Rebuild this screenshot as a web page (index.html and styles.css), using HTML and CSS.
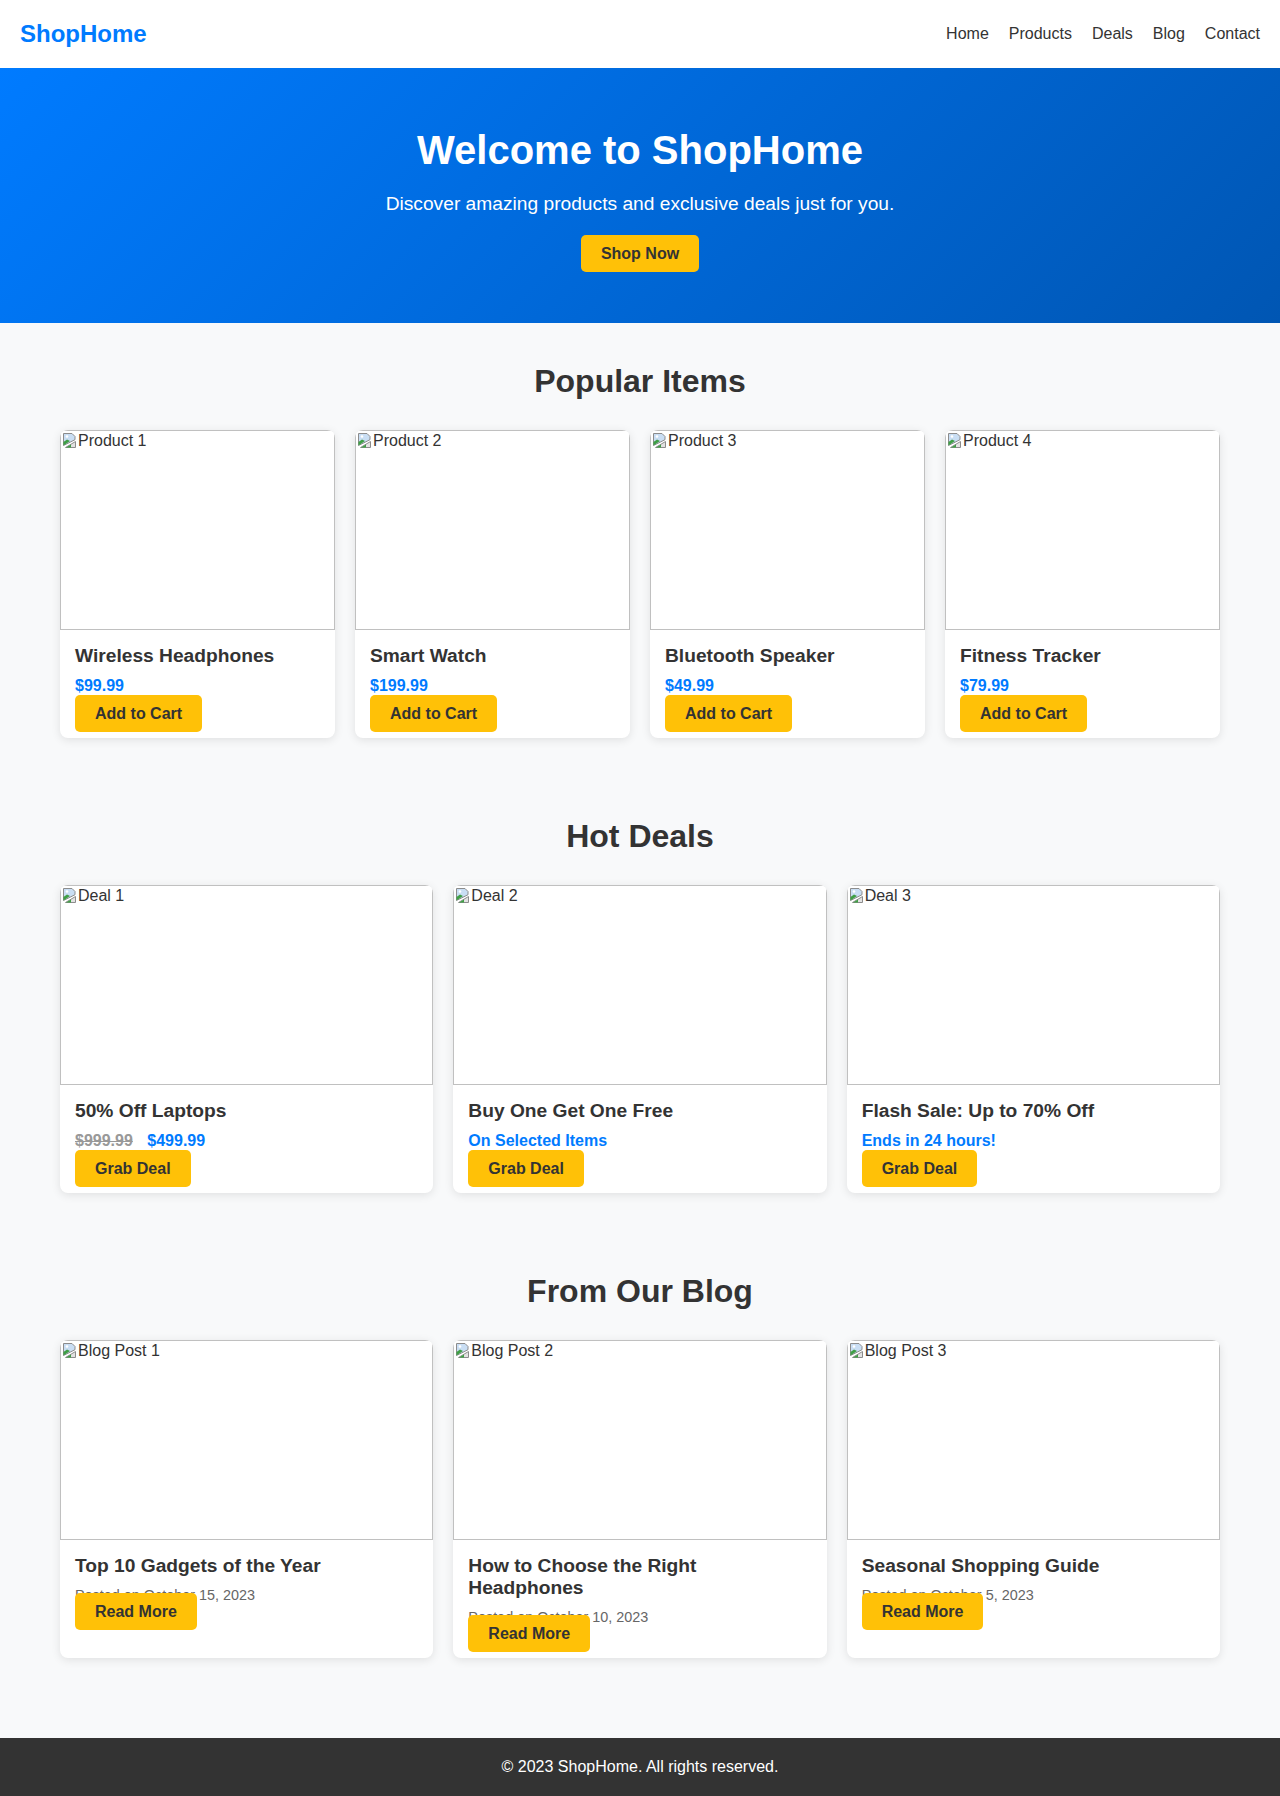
FILE: index.html
```html
<!DOCTYPE html>
<html lang="en">
<head>
<meta charset="utf-8">
<title>ShopHome</title>
<link rel="stylesheet" href="styles.css">
</head>
<body>
<header class="site-header">
  <div class="logo">ShopHome</div>
  <nav class="nav">
    <a href="#">Home</a>
    <a href="#">Products</a>
    <a href="#">Deals</a>
    <a href="#">Blog</a>
    <a href="#">Contact</a>
  </nav>
</header>

<section class="hero">
  <h1>Welcome to ShopHome</h1>
  <p>Discover amazing products and exclusive deals just for you.</p>
  <a href="#" class="btn">Shop Now</a>
</section>

<main class="main">
  <section class="section">
    <h2>Popular Items</h2>
    <div class="grid grid-4">
      <div class="card">
        <div class="ph"><svg class="broken" viewBox="0 0 16 16" width="16" height="16"><path d="M1.5 1.5h8.5l3 3v3.2L1.5 13.5z" fill="#c9def4" stroke="#8c8c8c"/><path d="M1.5 13.5V10l3.5-2.5 3 1.6z" fill="#3f9f45"/><circle cx="5" cy="4.5" r="1.3" fill="#fff"/><path d="M3.5 15.5l10-6v6z" fill="#e2e2e2" stroke="#8c8c8c"/><path d="M4 15.5l5-3v3z" fill="#3f9f45"/></svg><span>Product 1</span></div>
        <div class="card-body">
          <h3>Wireless Headphones</h3>
          <p class="price">$99.99</p>
          <a href="#" class="btn">Add to Cart</a>
        </div>
      </div>
      <div class="card">
        <div class="ph"><svg class="broken" viewBox="0 0 16 16" width="16" height="16"><path d="M1.5 1.5h8.5l3 3v3.2L1.5 13.5z" fill="#c9def4" stroke="#8c8c8c"/><path d="M1.5 13.5V10l3.5-2.5 3 1.6z" fill="#3f9f45"/><circle cx="5" cy="4.5" r="1.3" fill="#fff"/><path d="M3.5 15.5l10-6v6z" fill="#e2e2e2" stroke="#8c8c8c"/><path d="M4 15.5l5-3v3z" fill="#3f9f45"/></svg><span>Product 2</span></div>
        <div class="card-body">
          <h3>Smart Watch</h3>
          <p class="price">$199.99</p>
          <a href="#" class="btn">Add to Cart</a>
        </div>
      </div>
      <div class="card">
        <div class="ph"><svg class="broken" viewBox="0 0 16 16" width="16" height="16"><path d="M1.5 1.5h8.5l3 3v3.2L1.5 13.5z" fill="#c9def4" stroke="#8c8c8c"/><path d="M1.5 13.5V10l3.5-2.5 3 1.6z" fill="#3f9f45"/><circle cx="5" cy="4.5" r="1.3" fill="#fff"/><path d="M3.5 15.5l10-6v6z" fill="#e2e2e2" stroke="#8c8c8c"/><path d="M4 15.5l5-3v3z" fill="#3f9f45"/></svg><span>Product 3</span></div>
        <div class="card-body">
          <h3>Bluetooth Speaker</h3>
          <p class="price">$49.99</p>
          <a href="#" class="btn">Add to Cart</a>
        </div>
      </div>
      <div class="card">
        <div class="ph"><svg class="broken" viewBox="0 0 16 16" width="16" height="16"><path d="M1.5 1.5h8.5l3 3v3.2L1.5 13.5z" fill="#c9def4" stroke="#8c8c8c"/><path d="M1.5 13.5V10l3.5-2.5 3 1.6z" fill="#3f9f45"/><circle cx="5" cy="4.5" r="1.3" fill="#fff"/><path d="M3.5 15.5l10-6v6z" fill="#e2e2e2" stroke="#8c8c8c"/><path d="M4 15.5l5-3v3z" fill="#3f9f45"/></svg><span>Product 4</span></div>
        <div class="card-body">
          <h3>Fitness Tracker</h3>
          <p class="price">$79.99</p>
          <a href="#" class="btn">Add to Cart</a>
        </div>
      </div>
    </div>
  </section>

  <section class="section">
    <h2>Hot Deals</h2>
    <div class="grid grid-3">
      <div class="card">
        <div class="ph"><svg class="broken" viewBox="0 0 16 16" width="16" height="16"><path d="M1.5 1.5h8.5l3 3v3.2L1.5 13.5z" fill="#c9def4" stroke="#8c8c8c"/><path d="M1.5 13.5V10l3.5-2.5 3 1.6z" fill="#3f9f45"/><circle cx="5" cy="4.5" r="1.3" fill="#fff"/><path d="M3.5 15.5l10-6v6z" fill="#e2e2e2" stroke="#8c8c8c"/><path d="M4 15.5l5-3v3z" fill="#3f9f45"/></svg><span>Deal 1</span></div>
        <div class="card-body">
          <h3>50% Off Laptops</h3>
          <p class="price"><span class="old">$999.99</span> <span>$499.99</span></p>
          <a href="#" class="btn">Grab Deal</a>
        </div>
      </div>
      <div class="card">
        <div class="ph"><svg class="broken" viewBox="0 0 16 16" width="16" height="16"><path d="M1.5 1.5h8.5l3 3v3.2L1.5 13.5z" fill="#c9def4" stroke="#8c8c8c"/><path d="M1.5 13.5V10l3.5-2.5 3 1.6z" fill="#3f9f45"/><circle cx="5" cy="4.5" r="1.3" fill="#fff"/><path d="M3.5 15.5l10-6v6z" fill="#e2e2e2" stroke="#8c8c8c"/><path d="M4 15.5l5-3v3z" fill="#3f9f45"/></svg><span>Deal 2</span></div>
        <div class="card-body">
          <h3>Buy One Get One Free</h3>
          <p class="price">On Selected Items</p>
          <a href="#" class="btn">Grab Deal</a>
        </div>
      </div>
      <div class="card">
        <div class="ph"><svg class="broken" viewBox="0 0 16 16" width="16" height="16"><path d="M1.5 1.5h8.5l3 3v3.2L1.5 13.5z" fill="#c9def4" stroke="#8c8c8c"/><path d="M1.5 13.5V10l3.5-2.5 3 1.6z" fill="#3f9f45"/><circle cx="5" cy="4.5" r="1.3" fill="#fff"/><path d="M3.5 15.5l10-6v6z" fill="#e2e2e2" stroke="#8c8c8c"/><path d="M4 15.5l5-3v3z" fill="#3f9f45"/></svg><span>Deal 3</span></div>
        <div class="card-body">
          <h3>Flash Sale: Up to 70% Off</h3>
          <p class="price">Ends in 24 hours!</p>
          <a href="#" class="btn">Grab Deal</a>
        </div>
      </div>
    </div>
  </section>

  <section class="section">
    <h2>From Our Blog</h2>
    <div class="grid grid-3">
      <div class="card">
        <div class="ph"><svg class="broken" viewBox="0 0 16 16" width="16" height="16"><path d="M1.5 1.5h8.5l3 3v3.2L1.5 13.5z" fill="#c9def4" stroke="#8c8c8c"/><path d="M1.5 13.5V10l3.5-2.5 3 1.6z" fill="#3f9f45"/><circle cx="5" cy="4.5" r="1.3" fill="#fff"/><path d="M3.5 15.5l10-6v6z" fill="#e2e2e2" stroke="#8c8c8c"/><path d="M4 15.5l5-3v3z" fill="#3f9f45"/></svg><span>Blog Post 1</span></div>
        <div class="card-body">
          <h3>Top 10 Gadgets of the Year</h3>
          <p class="date">Posted on October 15, 2023</p>
          <a href="#" class="btn">Read More</a>
        </div>
      </div>
      <div class="card">
        <div class="ph"><svg class="broken" viewBox="0 0 16 16" width="16" height="16"><path d="M1.5 1.5h8.5l3 3v3.2L1.5 13.5z" fill="#c9def4" stroke="#8c8c8c"/><path d="M1.5 13.5V10l3.5-2.5 3 1.6z" fill="#3f9f45"/><circle cx="5" cy="4.5" r="1.3" fill="#fff"/><path d="M3.5 15.5l10-6v6z" fill="#e2e2e2" stroke="#8c8c8c"/><path d="M4 15.5l5-3v3z" fill="#3f9f45"/></svg><span>Blog Post 2</span></div>
        <div class="card-body">
          <h3>How to Choose the Right Headphones</h3>
          <p class="date">Posted on October 10, 2023</p>
          <a href="#" class="btn">Read More</a>
        </div>
      </div>
      <div class="card">
        <div class="ph"><svg class="broken" viewBox="0 0 16 16" width="16" height="16"><path d="M1.5 1.5h8.5l3 3v3.2L1.5 13.5z" fill="#c9def4" stroke="#8c8c8c"/><path d="M1.5 13.5V10l3.5-2.5 3 1.6z" fill="#3f9f45"/><circle cx="5" cy="4.5" r="1.3" fill="#fff"/><path d="M3.5 15.5l10-6v6z" fill="#e2e2e2" stroke="#8c8c8c"/><path d="M4 15.5l5-3v3z" fill="#3f9f45"/></svg><span>Blog Post 3</span></div>
        <div class="card-body">
          <h3>Seasonal Shopping Guide</h3>
          <p class="date">Posted on October 5, 2023</p>
          <a href="#" class="btn">Read More</a>
        </div>
      </div>
    </div>
  </section>
</main>

<footer class="site-footer">
  <p>&copy; 2023 ShopHome. All rights reserved.</p>
</footer>
</body>
</html>
```

FILE: styles.css
```css
* {
  box-sizing: border-box;
}

body {
  margin: 0;
  font-family: "Liberation Sans", Arial, sans-serif;
  font-size: 16px;
  color: #333;
  background: #f8f9fa;
}

a {
  text-decoration: none;
}

.site-header {
  display: flex;
  justify-content: space-between;
  align-items: center;
  padding: 20px;
  background: #fff;
}

.logo {
  font-size: 24px;
  font-weight: bold;
  color: #007bff;
}

.nav {
  display: flex;
  gap: 20px;
}

.nav a {
  color: #333;
  font-size: 16px;
}

.hero {
  padding: 60px 20px;
  text-align: center;
  color: #fff;
  background: linear-gradient(135deg, #007bff, #0056b3);
}

.hero h1 {
  margin: 0 0 20px;
  font-size: 40px;
}

.hero p {
  margin: 0 0 30px;
  font-size: 19.2px;
}

.btn {
  display: inline;
  padding: 10px 20px;
  background: #ffc107;
  color: #333;
  font-weight: bold;
  font-size: 16px;
  border-radius: 5px;
}

.main {
  padding-bottom: 40px;
}

.section {
  max-width: 1200px;
  margin: 0 auto;
  padding: 40px 20px;
}

.section h2 {
  margin: 0 0 30px;
  text-align: center;
  font-size: 32px;
  color: #333;
}

.grid {
  display: grid;
  gap: 20px;
}

.grid-4 {
  grid-template-columns: repeat(4, 1fr);
}

.grid-3 {
  grid-template-columns: repeat(3, 1fr);
}

.card {
  background: #fff;
  border-radius: 8px;
  overflow: hidden;
  box-shadow: 0 2px 10px rgba(0, 0, 0, 0.1);
}

.ph {
  display: flex;
  align-items: flex-start;
  height: 200px;
  border: 1px solid #c0c0c0;
  padding: 1px;
  color: #333;
  font-size: 16px;
  background: #fff;
}

.broken {
  flex: none;
  display: block;
}

.card-body {
  padding: 15px;
}

.card-body h3 {
  margin: 0 0 10px;
  font-size: 19.2px;
  color: #333;
}

.price {
  margin: 0 0 10px;
  font-weight: bold;
  color: #007bff;
}

.old {
  color: #999;
  text-decoration: line-through;
  margin-right: 10px;
}

.date {
  margin: 0;
  font-size: 14.4px;
  color: #666;
}

.site-footer {
  background: #333;
  color: #fff;
  text-align: center;
  padding: 20px;
}

.site-footer p {
  margin: 0;
}
```
